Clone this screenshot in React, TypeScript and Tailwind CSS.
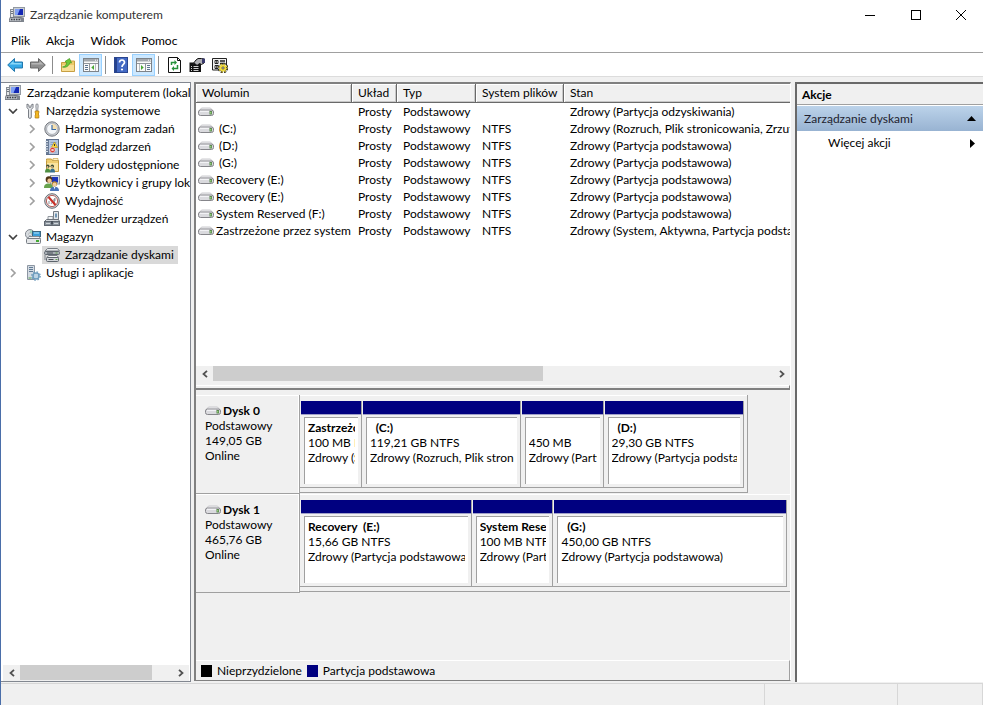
import { useState } from "react";
import type { ReactNode } from "react";

interface Volume {
  name: string;
  layout: string;
  type: string;
  fs: string;
  status: string;
}

interface Partition {
  name: string;
  size: string;
  status: string;
  weight: number;
}

interface Disk {
  name: string;
  size: string;
  // share of the row taken by the partition strip, in percent
  width: number;
  partitions: Partition[];
}

interface TreeItem {
  label: string;
  level: number;
  icon: ReactNode;
  state?: "open" | "closed";
}

const volumes: Volume[] = [
  { name: "", layout: "Prosty", type: "Podstawowy", fs: "", status: "Zdrowy (Partycja odzyskiwania)" },
  { name: " (C:)", layout: "Prosty", type: "Podstawowy", fs: "NTFS", status: "Zdrowy (Rozruch, Plik stronicowania, Zrzut" },
  { name: " (D:)", layout: "Prosty", type: "Podstawowy", fs: "NTFS", status: "Zdrowy (Partycja podstawowa)" },
  { name: " (G:)", layout: "Prosty", type: "Podstawowy", fs: "NTFS", status: "Zdrowy (Partycja podstawowa)" },
  { name: "Recovery (E:)", layout: "Prosty", type: "Podstawowy", fs: "NTFS", status: "Zdrowy (Partycja podstawowa)" },
  { name: "Recovery (E:)", layout: "Prosty", type: "Podstawowy", fs: "NTFS", status: "Zdrowy (Partycja podstawowa)" },
  { name: "System Reserved (F:)", layout: "Prosty", type: "Podstawowy", fs: "NTFS", status: "Zdrowy (Partycja podstawowa)" },
  { name: "Zastrzeżone przez system", layout: "Prosty", type: "Podstawowy", fs: "NTFS", status: "Zdrowy (System, Aktywna, Partycja podstawowa)" },
];

const disks: Disk[] = [
  {
    name: "Dysk 0",
    size: "149,05 GB",
    width: 91.5,
    partitions: [
      { name: "Zastrzeżone", size: "100 MB NTFS", status: "Zdrowy (System)", weight: 62 },
      { name: "  (C:)", size: "119,21 GB NTFS", status: "Zdrowy (Rozruch, Plik stronicowania)", weight: 159 },
      { name: "", size: "450 MB", status: "Zdrowy (Partycja)", weight: 83 },
      { name: "  (D:)", size: "29,30 GB NTFS", status: "Zdrowy (Partycja podstawowa)", weight: 141 },
    ],
  },
  {
    name: "Dysk 1",
    size: "465,76 GB",
    width: 100,
    partitions: [
      { name: "Recovery  (E:)", size: "15,66 GB NTFS", status: "Zdrowy (Partycja podstawowa)", weight: 172 },
      { name: "System Reserved", size: "100 MB NTFS", status: "Zdrowy (Partycja)", weight: 82 },
      { name: "  (G:)", size: "450,00 GB NTFS", status: "Zdrowy (Partycja podstawowa)", weight: 234 },
    ],
  },
];

function Icon({ children }: { children: ReactNode }) {
  return (
    <svg width="16" height="16" viewBox="0 0 16 16" className="shrink-0" aria-hidden="true">
      {children}
    </svg>
  );
}

function ComputerIcon() {
  return (
    <Icon>
      <rect x="4.500" y=".5" width="11" height="9" fill="#c9ced4" stroke="#9299a2" />
      <rect x="6" y="2" width="8" height="6" fill="#1428b4" />
      <path d="M6 2h5L8.500 8H6z" fill="#7f9ff4" />
      <path d="M9 9.500h4.500v1.500H9z" fill="#8a9098" />
      <rect x="1.500" y="2.500" width="3" height="8" fill="#e4e6e8" stroke="#878d95" />
      <path d="M2 4.500h2M2 6.500h2" stroke="#6f7780" />
      <path d="M1 10.500h10.500l1.500 4H0z" fill="#b9bdc3" stroke="#646a72" strokeWidth=".8" />
      <path d="M2 12.500h9" stroke="#3d4249" strokeWidth="1.500" strokeDasharray="1.500 1" />
      <path d="M11.500 10.500h3.500v4.500h-2.500z" fill="#7f858e" />
    </Icon>
  );
}

function ToolsIcon() {
  return (
    <Icon>
      <path d="M2 1v3.500l1.500 2V14a1.300 1.300 0 0 0 2.800 0V6.500l1.700-2V1L6 2.200v2H4V2.200z" fill="#e5e7ea" stroke="#6c7178" strokeWidth=".9" />
      <path d="M11.200 1h1.600l.4 2-.5 5h-1.400l-.5-5z" fill="#d9dce0" stroke="#75797f" strokeWidth=".7" />
      <path d="M10.200 8h3.600v2l-.6 1 .6 1v3h-3.600v-3l.6-1-.6-1z" fill="#f5b921" stroke="#b67d0e" strokeWidth=".8" />
    </Icon>
  );
}

function ClockIcon() {
  return (
    <Icon>
      <circle cx="8" cy="8" r="7.200" fill="#c9ccd0" stroke="#74787f" />
      <circle cx="8" cy="8" r="5.400" fill="#f4f7fa" stroke="#9da1a7" strokeWidth=".7" />
      <path d="M8 8V2.800A5.200 5.200 0 0 1 13.200 8z" fill="#f5dfae" />
      <path d="M8 4v4.500h4" fill="none" stroke="#3c6ca5" strokeWidth="1.200" />
    </Icon>
  );
}

function EventIcon() {
  return (
    <Icon>
      <rect x="2.500" y=".5" width="12" height="15" fill="#b4c6df" stroke="#5e6f8c" />
      <rect x="2" y="1" width="3" height="14" fill="#6a7c97" />
      <path d="M1 2.500h3M1 5h3M1 7.500h3M1 10h3M1 12.500h3" stroke="#dce3ec" />
      <path d="M6.500 3.500h6M6.500 5.500h6M6.500 13h6" stroke="#8aa2c6" />
      <path d="M10.500 3l3.200 5.500H7.300z" fill="#ffd83a" stroke="#b58b08" strokeWidth=".6" />
      <path d="M10.500 5v2" stroke="#333" />
      <circle cx="8.500" cy="11" r="2.700" fill="#d73a32" stroke="#fff" strokeWidth=".5" />
      <path d="M7.500 10l2 2m0-2l-2 2" stroke="#fff" />
    </Icon>
  );
}

function SharedFolderIcon() {
  return (
    <Icon>
      <path d="M2.500 3.500V2h5l1 1.500h6v11h-12z" fill="#efcd70" stroke="#c19a3d" />
      <path d="M3 6h11v8H3z" fill="#f9e4a0" />
      <path d="M9 1.500h5v2H9z" fill="#fff2c4" stroke="#c19a3d" strokeWidth=".6" />
      <circle cx="3.800" cy="9.300" r="1.700" fill="#3c4d35" />
      <circle cx="8.300" cy="9.300" r="1.700" fill="#3c4d35" />
      <circle cx="3.500" cy="10" r=".9" fill="#e7bd8d" />
      <circle cx="8" cy="10" r=".9" fill="#e7bd8d" />
      <path d="M1 15.500c0-3 1-4 2.700-4s2.500 1 2.500 4z" fill="#4e8f42" />
      <path d="M6 15.500c0-3 1-4 2.500-4s2.500 1 2.500 4z" fill="#36708f" />
    </Icon>
  );
}

function UsersIcon() {
  return (
    <Icon>
      <rect x="6.500" y=".5" width="9" height="8.500" fill="#d5dce4" stroke="#8e98a4" />
      <rect x="8" y="2" width="6" height="5.500" fill="#1c34b8" />
      <circle cx="5" cy="4.500" r="3.300" fill="#4f3314" />
      <circle cx="5.500" cy="5.700" r="2.200" fill="#efc392" />
      <path d="M0 13c0-3.500 2-4.500 4.500-4.500S9 9.500 9 13z" fill="#68a34e" />
      <circle cx="10.500" cy="8.800" r="2.600" fill="#b4852d" />
      <circle cx="10.600" cy="9.500" r="1.900" fill="#f2cda2" />
      <path d="M6 16c0-3 1.500-4.300 4.500-4.300S15 13 15 16z" fill="#4773b8" />
      <path d="M9.800 12h1.500l-.7 2.500z" fill="#fff" />
    </Icon>
  );
}

function PerformanceIcon() {
  return (
    <Icon>
      <circle cx="8" cy="8" r="7.300" fill="#d3d6d9" stroke="#666b72" />
      <circle cx="8" cy="8" r="5.600" fill="#fff" stroke="#b5625d" strokeWidth="1" />
      <path d="M7 11l3.500-5.500V11" fill="none" stroke="#8a8f96" strokeWidth=".9" />
      <path d="M4.500 4l7 8" stroke="#c92f27" strokeWidth="2" />
      <path d="M5 8v3M11 5v3" stroke="#8a8f96" />
    </Icon>
  );
}

function DeviceIcon() {
  return (
    <Icon>
      <path d="M9.500 .5h5v9h-5z" fill="#e4e7ea" stroke="#737a82" />
      <path d="M11 2.500h2v4h-2z" fill="#7096b4" />
      <path d="M4 5.500h5v3H4z" fill="#f2f3f4" stroke="#91979e" />
      <path d="M2.500 8.500h12l1 2H.500z" fill="#d5d9dd" stroke="#6c727a" />
      <rect x=".5" y="10.500" width="15" height="4" fill="#8b949d" stroke="#626972" />
      <path d="M2 12.500h4M10 12.500h4" stroke="#d0d5d9" />
      <path d="M7 10h2v3.500H7z" fill="#49515b" />
    </Icon>
  );
}

function StorageIcon() {
  return (
    <Icon>
      <circle cx="5" cy="5.200" r="4.600" fill="#d7dbdf" stroke="#81868d" />
      <path d="M5 5V1a4 4 0 0 1 3.700 2.500z" fill="#9ed7bb" />
      <circle cx="5" cy="5.200" r="1.300" fill="#fff" stroke="#8c9299" strokeWidth=".6" />
      <rect x="7.500" y="2.500" width="8" height="5" fill="#3b9ed8" stroke="#3b6780" />
      <path d="M9 4h5" stroke="#b4e4fc" />
      <path d="M2.500 9.500l1.500-2h10l1.500 2z" fill="#f0f1f2" stroke="#858b92" />
      <rect x="1.500" y="9.500" width="14" height="5" rx="1" fill="#e4e6e8" stroke="#777d84" />
      <rect x="11" y="11" width="3" height="2" fill="#45a933" />
    </Icon>
  );
}

function DiskManagementIcon() {
  return (
    <Icon>
      <path d="M3.500 1.500h10l2 2.500H1z" fill="#e9ebed" stroke="#777d84" />
      <rect x=".5" y="4.500" width="15" height="3" rx="1" fill="#a9afb5" stroke="#5f666e" />
      <path d="M4.500 8.500h8.500l1.500 2H3z" fill="#f2f3f4" stroke="#777d84" />
      <path d="M1 8v5" stroke="#7c828a" />
      <rect x="2.500" y="10.500" width="12" height="4" rx="1" fill="#d3d6da" stroke="#5d646c" />
      <path d="M3 6h6M4.500 12.500h5" stroke="#4b5159" />
      <path d="M11.500 6h2M11.500 12.500h2" stroke="#61a14d" />
    </Icon>
  );
}

function ServicesIcon() {
  return (
    <Icon>
      <path d="M2.500 .5h7v14h-7z" fill="#d4dbe3" stroke="#8c96a2" />
      <path d="M4 2.500h4M4 4.500h4M4 6.500h4" stroke="#607a94" />
      <path d="M3.500 13h3" stroke="#59a34f" />
      <circle cx="11" cy="11" r="3" fill="#d9e8f4" stroke="#6e9cbd" strokeWidth="1.600" />
      <circle cx="11" cy="11" r="4.200" fill="none" stroke="#6e9cbd" strokeWidth="1.300" strokeDasharray="1.600 1.700" />
      <circle cx="11" cy="11" r="1.200" fill="#fff" stroke="#6e9cbd" strokeWidth=".6" />
    </Icon>
  );
}

function DriveIcon() {
  return (
    <svg width="16" height="10" viewBox="0 0 16 10" className="shrink-0" aria-hidden="true">
      <path d="M1 4L3.500 1h9L15 4z" fill="#f2f2f4" stroke="#bdbdc1" strokeWidth=".8" />
      <rect x=".5" y="3" width="15" height="5.500" rx="2" fill="#dadade" stroke="#85858a" />
      <path d="M2 4.300h9" stroke="#f8f8fa" />
      <rect x="11.500" y="4" width="2.500" height="3.500" fill="#5d8a50" />
      <path d="M12.700 5v1.500" stroke="#9ddc83" />
    </svg>
  );
}

const tree: TreeItem[] = [
  { label: "Zarządzanie komputerem (lokalne)", level: 0, icon: <ComputerIcon /> },
  { label: "Narzędzia systemowe", level: 1, icon: <ToolsIcon />, state: "open" },
  { label: "Harmonogram zadań", level: 2, icon: <ClockIcon />, state: "closed" },
  { label: "Podgląd zdarzeń", level: 2, icon: <EventIcon />, state: "closed" },
  { label: "Foldery udostępnione", level: 2, icon: <SharedFolderIcon />, state: "closed" },
  { label: "Użytkownicy i grupy lokalne", level: 2, icon: <UsersIcon />, state: "closed" },
  { label: "Wydajność", level: 2, icon: <PerformanceIcon />, state: "closed" },
  { label: "Menedżer urządzeń", level: 2, icon: <DeviceIcon /> },
  { label: "Magazyn", level: 1, icon: <StorageIcon />, state: "open" },
  { label: "Zarządzanie dyskami", level: 2, icon: <DiskManagementIcon /> },
  { label: "Usługi i aplikacje", level: 1, icon: <ServicesIcon />, state: "closed" },
];

function TreeRow({ item, selected, onSelect }: { item: TreeItem; selected: boolean; onSelect: () => void }) {
  return (
    <li className={`flex h-[18px] items-center ${item.level === 2 ? "pl-[23px]" : "pl-1"}`}>
      {item.level > 0 && (
        <span className="flex w-[18px] shrink-0 pl-[3px]">
          {item.state === "open" && (
            <svg width="10" height="6" viewBox="0 0 10 6" aria-hidden="true">
              <path d="M1 1l4 4 4-4" fill="none" stroke="#404040" strokeWidth="1.700" />
            </svg>
          )}
          {item.state === "closed" && (
            <svg width="10" height="10" viewBox="0 0 10 10" aria-hidden="true">
              <path d="M3 1l4 4-4 4" fill="none" stroke="#a0a0a0" strokeWidth="1.700" />
            </svg>
          )}
        </span>
      )}
      <button
        type="button"
        onClick={onSelect}
        className={`flex h-[18px] items-center whitespace-nowrap pr-1 ${item.level === 0 ? "gap-[6px]" : "gap-[5px] pl-[2px]"} ${selected ? "bg-[#d9d9d9]" : ""}`}
      >
        {item.icon}
        {item.label}
      </button>
    </li>
  );
}

function ScrollBar({ thumb }: { thumb: string }) {
  return (
    <div className="flex h-4 shrink-0 bg-[#f0f0f0]">
      <button type="button" aria-label="Przewiń w lewo" className="flex w-[17px] items-center justify-center">
        <svg width="6" height="8" viewBox="0 0 6 8">
          <path d="M5 .8L1.500 4 5 7.200" fill="none" stroke="#505050" strokeWidth="1.800" />
        </svg>
      </button>
      <div className="flex-1">
        <div className={`h-[15px] bg-[#cdcdcd] ${thumb}`} />
      </div>
      <button type="button" aria-label="Przewiń w prawo" className="flex w-[17px] items-center justify-center">
        <svg width="6" height="8" viewBox="0 0 6 8">
          <path d="M1 .8L4.500 4 1 7.200" fill="none" stroke="#505050" strokeWidth="1.800" />
        </svg>
      </button>
    </div>
  );
}

function ToolButton({ label, pressed, children }: { label: string; pressed?: boolean; children: ReactNode }) {
  return (
    <button
      type="button"
      aria-label={label}
      className={`flex h-[22px] w-[23px] items-center justify-center ${pressed ? "border border-[#99d1ff] bg-[#cce8ff]" : ""}`}
    >
      <Icon>{children}</Icon>
    </button>
  );
}

function Separator() {
  return <span className="mx-[3px] h-[18px] w-px bg-[#8c8c8c]" />;
}

function Toolbar() {
  return (
    <div className="flex h-6 shrink-0 items-center border-b border-[#dcdcdc] bg-white pl-[2px]">
      <ToolButton label="Wstecz">
        <path d="M7.500 1.500v3.500h8v6h-8v3.500L.700 8z" fill="#35a8e6" stroke="#2278ad" />
        <path d="M6.500 4v2h8v1.500H2.500z" fill="#8bd8f8" />
      </ToolButton>
      <ToolButton label="Dalej">
        <path d="M8.500 1.500v3.500h-8v6h8v3.500L15.300 8z" fill="#8e8e8e" stroke="#686868" />
        <path d="M9.500 4v2h-8v1.500h12z" fill="#b5b5b5" />
      </ToolButton>
      <Separator />
      <ToolButton label="W górę o jeden poziom">
        <path d="M1.500 5.500h5l1-1.500h7v10.500h-13z" fill="#eecb6d" stroke="#c79f42" />
        <path d="M2 8h12v6H2z" fill="#f8df97" />
        <path d="M2.500 10c2.500-.3 4-2 4.200-4.500L5 4.500 9.500 1.500l2 4.500-1.700-.3C9 9 6 11 2.500 10z" fill="#6dc93c" stroke="#419820" strokeWidth=".7" />
      </ToolButton>
      <ToolButton label="Pokaż drzewo konsoli" pressed>
        <rect x=".5" y="1.500" width="15" height="13" fill="#fafafa" stroke="#7d8389" />
        <path d="M1 2h14v2.500H1z" fill="#a3a8ad" />
        <path d="M12 3.200h1M14 3.200h1" stroke="#fff" />
        <path d="M1 6.500h14M6.500 7v7" stroke="#8f959b" />
        <path d="M2 8.500h3M2 10.500h3M2 12.500h3" stroke="#5c7591" />
        <path d="M11 8v5L8.300 10.500z" fill="#48a832" />
        <path d="M12.500 7v7" stroke="#b8bcc0" />
      </ToolButton>
      <Separator />
      <ToolButton label="Pomoc">
        <rect x="1.500" y=".5" width="13" height="15" fill="#4369c4" stroke="#29458f" />
        <path d="M2 1h2v14H2z" fill="#26428c" />
        <path d="M6.500 5.500c0-3.500 5-3.200 5 0 0 2-2.500 2-2.500 4.500" fill="none" stroke="#fff" strokeWidth="1.700" />
        <circle cx="9" cy="12.500" r="1.100" fill="#fff" />
      </ToolButton>
      <ToolButton label="Pokaż okienko akcji" pressed>
        <rect x=".5" y="1.500" width="15" height="13" fill="#fafafa" stroke="#7d8389" />
        <path d="M1 2h14v2.500H1z" fill="#a3a8ad" />
        <path d="M12 3.200h1M14 3.200h1" stroke="#fff" />
        <path d="M1 6.500h14M9.500 7v7" stroke="#8f959b" />
        <path d="M3.500 7v7" stroke="#b8bcc0" />
        <path d="M11 8.500h3M11 10.500h3M11 12.500h3" stroke="#5c7591" />
        <path d="M5 8v5l2.700-2.500z" fill="#48a832" />
      </ToolButton>
      <Separator />
      <ToolButton label="Odśwież">
        <path d="M2.500 .5h9l3 3v12h-12z" fill="#fff" stroke="#111" />
        <path d="M11.500 .5v3h3" fill="none" stroke="#111" />
        <path d="M5.500 8V5.500h4M11.500 8v3.500h-4" fill="none" stroke="#25913a" strokeWidth="1.500" />
        <path d="M8.500 3L11 5.500 8.500 8zM8 9v5l-2.500-2.500z" fill="#25913a" />
      </ToolButton>
      <ToolButton label="Właściwości">
        <path d="M.5 5.500h11.500v9.500H.5z" fill="#111" />
        <path d="M2 9.500h1M4.500 9.500h5M2 11.500h1M4.500 11.500h5M2 13.500h1M4.500 13.500h5" stroke="#fff" strokeWidth=".8" />
        <path d="M3.500 7.500L7 3l2-1.500h3.500L15 2v4l-2.500 1.500-2-1L8 8.500 6 6.500z" fill="#b0b0b4" stroke="#111" />
        <path d="M13 1.500h3v4.500h-3z" fill="#3a3a6c" />
      </ToolButton>
      <ToolButton label="Ustawienia">
        <path d="M.5 1.500h14v11.500H.5z" fill="#f2f2f2" stroke="#222" />
        <path d="M3 3.500h3v3H3zM3 8.500h3v3H3z" fill="#fff" stroke="#222" />
        <path d="M4 5h1M4 10h1M8 4h5M8 6.500h5" stroke="#222" strokeWidth="1.500" />
        <circle cx="11" cy="11" r="4" fill="none" stroke="#222" strokeWidth="2.600" strokeDasharray="2 1.140" />
        <circle cx="11" cy="11" r="3.900" fill="none" stroke="#f2dc3c" strokeWidth="1.200" strokeDasharray="1.400 1.660" />
        <circle cx="11" cy="11" r="3.300" fill="#f2dc3c" />
        <circle cx="11" cy="11" r="1.100" fill="#fff" stroke="#333" strokeWidth=".8" />
      </ToolButton>
    </div>
  );
}

function VolumeTable() {
  const head = "overflow-hidden whitespace-nowrap border-b border-[#696969] bg-[#f0f0f0] p-0 pl-[6px] text-left font-normal";
  const divided = `${head} border-r shadow-[inset_1px_1px_#fff,inset_-1px_-1px_#c8c8c8]`;
  const cell = "overflow-hidden whitespace-nowrap p-0 pl-[6px]";
  return (
    <div className="min-h-0 flex-1 overflow-hidden">
      <table className="w-full table-fixed border-separate border-spacing-0">
        <colgroup>
          <col className="w-[156px]" />
          <col className="w-[45px]" />
          <col className="w-[79px]" />
          <col className="w-[88px]" />
          <col />
        </colgroup>
        <thead>
          <tr className="h-[19px]">
            <th className={divided}>Wolumin</th>
            <th className={divided}>Układ</th>
            <th className={divided}>Typ</th>
            <th className={divided}>System plików</th>
            <th className={`${head} shadow-[inset_1px_1px_#fff,inset_0_-1px_#c8c8c8]`}>Stan</th>
          </tr>
        </thead>
        <tbody>
          {volumes.map((v, i) => (
            <tr key={i} className="h-[17px] leading-[17px]">
              <td className="overflow-hidden p-0 pl-[2px]">
                <div className="flex items-center gap-[2px] whitespace-pre">
                  <DriveIcon />
                  {v.name}
                </div>
              </td>
              <td className={cell}>{v.layout}</td>
              <td className={cell}>{v.type}</td>
              <td className={cell}>{v.fs}</td>
              <td className={cell}>{v.status}</td>
            </tr>
          ))}
        </tbody>
      </table>
    </div>
  );
}

function PartitionBox({ partition }: { partition: Partition }) {
  return (
    <div className="flex min-w-0 basis-0" style={{ flexGrow: partition.weight }}>
      <div className="flex min-w-0 flex-1 flex-col border-b border-r border-[#a0a0a0] pl-px">
        <div className="h-[14px] border-b border-[#a0a0c8] bg-[#000080]" />
        <div className="mx-[3px] mt-[2px] mb-[3px] h-[68px] overflow-hidden whitespace-pre border-l border-t border-[#a0a0a0] bg-white px-[3px] pt-[2px]">
          <div className="overflow-hidden">
            <div className="h-[15px] font-bold">{partition.name}</div>
            <div className="h-[15px]">{partition.size}</div>
            <div className="h-[15px]">{partition.status}</div>
          </div>
        </div>
      </div>
    </div>
  );
}

function DiskRow({ disk }: { disk: Disk }) {
  return (
    <div className="flex h-[99px] leading-[15px]">
      <div className="w-[104px] shrink-0 border-b border-r border-[#a0a0a0] pl-[9px] pt-2 shadow-[inset_-1px_1px_#fff]">
        <div className="flex h-[15px] items-center font-bold">
          <DriveIcon />
          <span className="pl-[2px]">{disk.name}</span>
        </div>
        <div>Podstawowy</div>
        <div>{disk.size}</div>
        <div>Online</div>
      </div>
      <div className="min-w-0 flex-1">
        <div
          className={`flex h-[98px] border-b border-[#a0a0a0] pb-1 pr-[3px] pt-[6px] shadow-[inset_0_1px_#fff] ${disk.width < 100 ? "border-r" : ""}`}
          style={{ width: `${disk.width}%` }}
        >
          {disk.partitions.map((p, i) => (
            <PartitionBox key={i} partition={p} />
          ))}
        </div>
      </div>
    </div>
  );
}

export default function App() {
  const [selected, setSelected] = useState("Zarządzanie dyskami");

  return (
    <div className="flex h-screen flex-col overflow-hidden border-l border-[#4a6ea9] bg-[#f0f0f0] font-[Lato,'Open_Sans',sans-serif] text-[12px] leading-4 text-black">
      <header className="flex h-[30px] shrink-0 items-center bg-white pl-2">
        <ComputerIcon />
        <h1 className="flex-1 pl-[5px] text-[#333333]">Zarządzanie komputerem</h1>
        <button type="button" aria-label="Minimalizuj" className="flex h-full w-[46px] items-center justify-center">
          <svg width="10" height="10" viewBox="0 0 10 10"><path d="M0 5.500h10" stroke="#000" /></svg>
        </button>
        <button type="button" aria-label="Maksymalizuj" className="flex h-full w-[46px] items-center justify-center">
          <svg width="10" height="10" viewBox="0 0 10 10"><rect x=".5" y=".5" width="9" height="9" fill="none" stroke="#000" /></svg>
        </button>
        <button type="button" aria-label="Zamknij" className="flex h-full w-[44px] items-center justify-center">
          <svg width="10" height="10" viewBox="0 0 10 10"><path d="M0 0l10 10M10 0L0 10" stroke="#000" /></svg>
        </button>
      </header>

      <nav className="flex h-[23px] shrink-0 items-center gap-4 border-b border-[#a0a0a0] bg-white pl-[10px]">
        <button type="button">Plik</button>
        <button type="button">Akcja</button>
        <button type="button">Widok</button>
        <button type="button">Pomoc</button>
      </nav>

      <Toolbar />

      <main className="flex min-h-0 flex-1 pt-[5px]">
        <aside className="flex w-[190px] shrink-0 flex-col border-b border-r border-t border-[#828790] bg-white">
          <ul className="min-h-0 flex-1 overflow-hidden pt-px">
            {tree.map((item) => (
              <TreeRow
                key={item.label}
                item={item}
                selected={selected === item.label}
                onSelect={() => setSelected(item.label)}
              />
            ))}
          </ul>
          <div className="pl-[2px] pr-px">
            <ScrollBar thumb="w-[87%]" />
          </div>
        </aside>

        <section className="mb-px ml-[3px] flex min-w-0 flex-1 flex-col border-b border-l-2 border-r border-t-2 border-[#808080] border-r-white">
          <div className="flex h-[282px] shrink-0 flex-col bg-white">
            <VolumeTable />
          </div>
          <ScrollBar thumb="w-[59%]" />
          <div className="mt-[3px] h-[5px] shrink-0 border-b-2 border-r border-t border-[#808080] border-t-white" />

          <div className="mt-[5px] min-h-0 flex-1 overflow-hidden">
            {disks.map((disk) => (
              <DiskRow key={disk.name} disk={disk} />
            ))}
          </div>

          <div className="flex h-5 shrink-0 items-center border-r border-t border-[#a0a0a0] border-t-white pl-[5px]">
            <span className="h-3 w-[11px] bg-black" />
            <span className="pl-[5px] pr-[5px]">Nieprzydzielone</span>
            <span className="h-3 w-[11px] bg-[#000080]" />
            <span className="pl-[5px]">Partycja podstawowa</span>
          </div>
        </section>

        <aside className="ml-1 flex w-[188px] shrink-0 flex-col border-l-2 border-t-2 border-[#696969] bg-white">
          <h2 className="h-[21px] border-b border-[#a0a0a0] bg-[#f0f0f0] pl-[5px] pt-[3px] font-bold">Akcje</h2>
          <button
            type="button"
            className="mt-px flex h-[25px] items-center justify-between bg-linear-to-b from-[#bcd3ea] to-[#98b3d2] pl-[7px] pr-[7px] text-[#1e1e2e]"
          >
            Zarządzanie dyskami
            <svg width="9" height="5" viewBox="0 0 9 5" aria-hidden="true"><path d="M4.500 0L9 5H0z" fill="#000" /></svg>
          </button>
          <button type="button" className="flex h-6 items-center justify-between pl-[31px] pr-2">
            Więcej akcji
            <svg width="5" height="9" viewBox="0 0 5 9" aria-hidden="true"><path d="M0 0l5 4.500L0 9z" fill="#000" /></svg>
          </button>
        </aside>
      </main>

      <footer className="mt-px flex h-[22px] shrink-0 border-t border-[#d7d7d7]">
        <div className="flex-1 border-r border-[#d7d7d7]" />
        <div className="w-[133px] border-r border-[#d7d7d7]" />
        <div className="w-[85px] border-r border-[#d7d7d7]" />
      </footer>
    </div>
  );
}
